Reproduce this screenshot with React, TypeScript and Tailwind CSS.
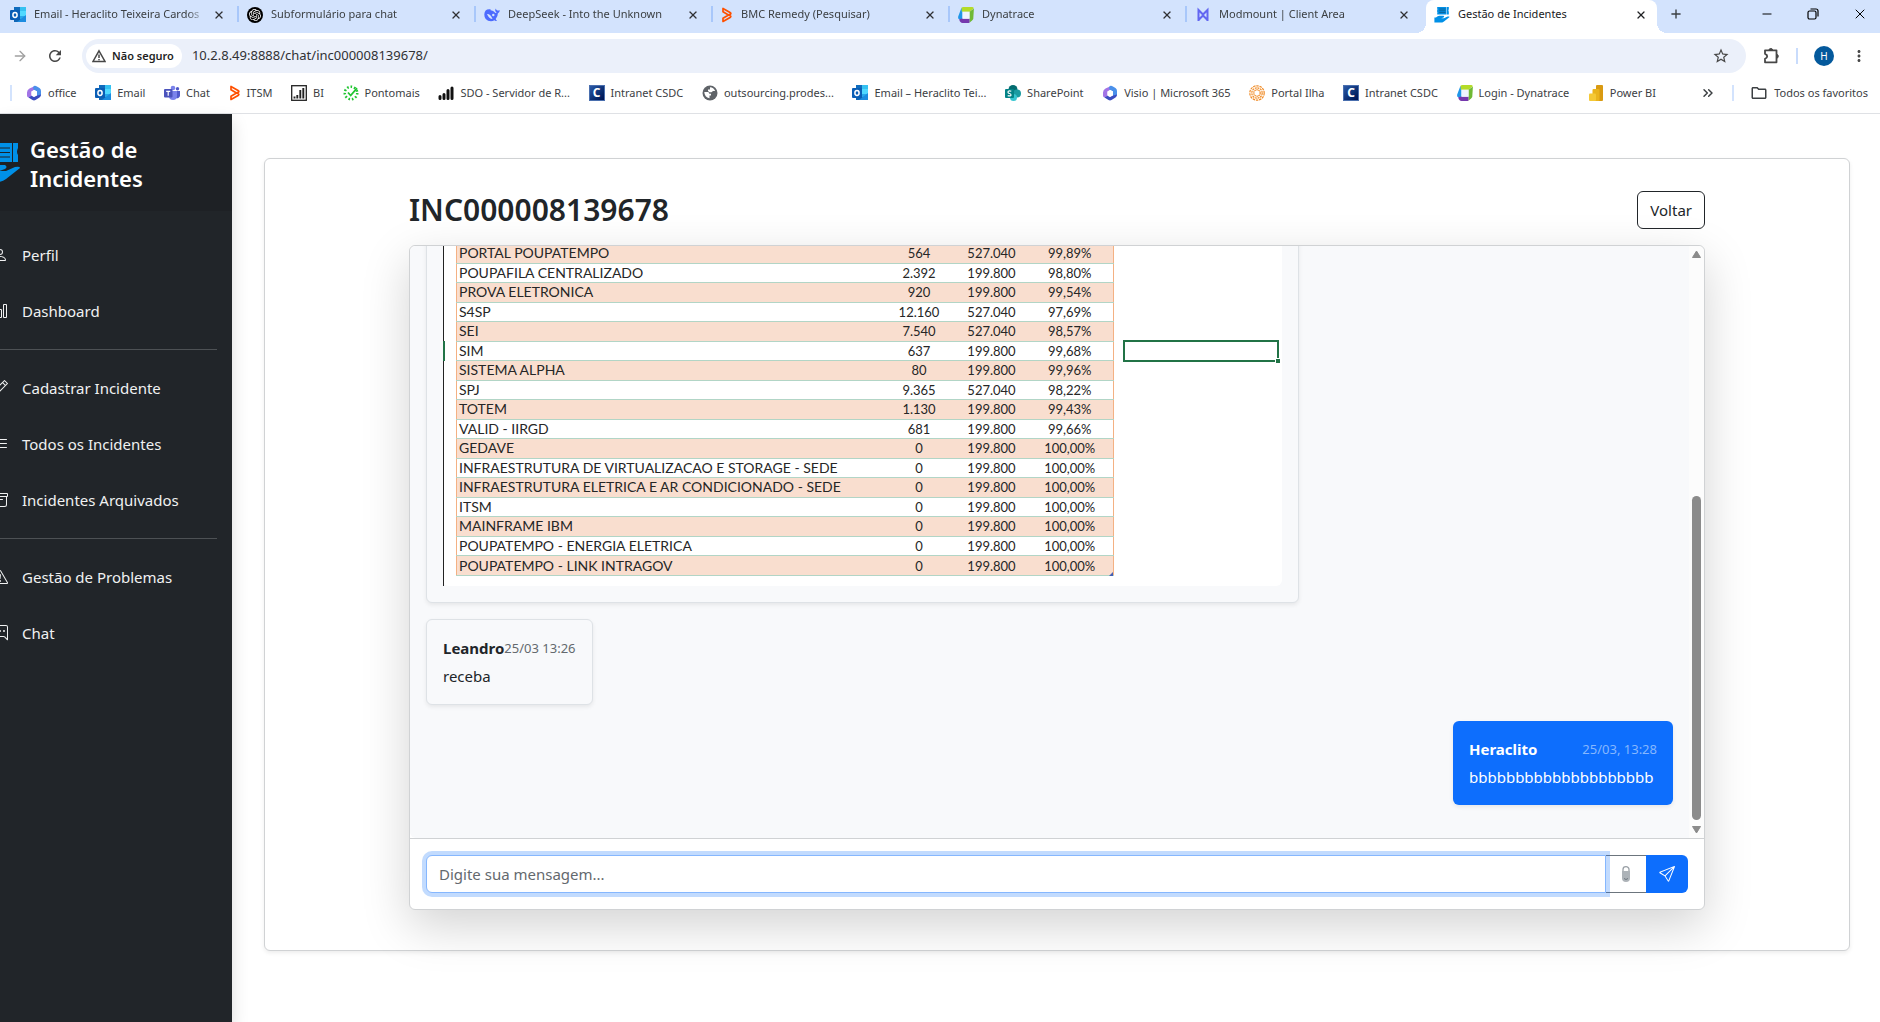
import type { ReactNode } from "react";
import {
  BsArchive,
  BsBarChart,
  BsChatRightDots,
  BsExclamationTriangle,
  BsListUl,
  BsPencil,
  BsPerson,
  BsSend,
} from "react-icons/bs";
import { MdMoreVert, MdOutlineFolder, MdRefresh, MdStarBorder } from "react-icons/md";
import { SiOpenai } from "react-icons/si";
import { ArrowRight, ChevronsRight, Minus, Plus, X } from "lucide-react";

/* ---------- favicons ---------- */

const OutlookIcon = () => (
  <svg viewBox="0 0 16 16" className="size-4 shrink-0" aria-hidden="true">
    <rect x="4" y="0" width="12" height="15" rx="1" fill="#28a8ea" />
    <rect x="4" y="0" width="6" height="4" fill="#0f6cbd" />
    <rect x="10" y="0" width="6" height="4" fill="#35c1f1" />
    <rect x="10" y="4" width="6" height="5" fill="#50d9ff" />
    <path d="M4 9l12 6H4z" fill="#1066b5" />
    <path d="M16 8v7H7z" fill="#1b8ce0" />
    <rect x="0" y="3" width="10" height="10" rx="1" fill="#0a5eb5" />
    <ellipse cx="5" cy="8" rx="2.1" ry="2.4" fill="none" stroke="#fff" strokeWidth="1.5" />
  </svg>
);

const CopilotIcon = () => (
  <svg viewBox="0 0 16 16" className="size-4 shrink-0" aria-hidden="true">
    <path d="M9 1L3.500 3.500Q1 5 1 7.500v3Q1 13 3.500 12.500L5.500 11V6.500L10 4z" fill="#a274e6" />
    <path d="M8.500.800q1-.300 2 .400L13.500 3Q15 4 15 6v4.500L11 11V6.500L7.500 4.500 7 2z" fill="#4a90ea" />
    <path d="M2.500 12.500l3-1.800L8 12l3-1.500 4-1q0 2-1.500 3L9.500 15q-1.500.800-3 0z" fill="#3b4cc0" />
    <path d="M5.500 6.500L8 5l3 1.500V10l-3 1.700L5.500 10z" fill="#fff" />
  </svg>
);

const TeamsIcon = () => (
  <svg viewBox="0 0 16 16" className="size-4 shrink-0" aria-hidden="true">
    <circle cx="9" cy="3" r="2.300" fill="#7b83eb" />
    <circle cx="13.500" cy="3.800" r="1.700" fill="#5059c9" />
    <path d="M11 6h5v5a3 3 0 01-4 2z" fill="#5059c9" />
    <path d="M5 6h8v5a4 4 0 01-8 0z" fill="#7b83eb" />
    <rect x="0" y="4" width="8.500" height="8.500" rx="1" fill="#4b53bc" />
    <path d="M2.200 6.300h4M4.200 6.300v4.500" stroke="#fff" strokeWidth="1.200" />
  </svg>
);

const BmcIcon = () => (
  <svg viewBox="0 0 12 16" className="h-4 w-3 shrink-0" aria-hidden="true">
    <path
      d="M2 1.500v3.200L7.500 8 2 11.300v3.200l7.500-4.300q.700-.700 0-1.400L7.500 8l2-.900q.700-.600 0-1.300z"
      fill="none"
      stroke="#fe5000"
      strokeWidth="1.700"
      strokeLinejoin="round"
    />
  </svg>
);

const BarsBoxIcon = () => (
  <svg viewBox="0 0 16 16" className="size-4 shrink-0" aria-hidden="true">
    <rect x=".7" y=".7" width="14.600" height="14.600" fill="#fff" stroke="#222" strokeWidth="1.300" />
    <path d="M3.500 13.500v-2M6.300 13.500V10M9.300 13.500V5M12.300 13.500V3" stroke="#222" strokeWidth="1.900" />
  </svg>
);

const CheckBurstIcon = () => (
  <svg viewBox="0 0 16 16" className="size-4 shrink-0" aria-hidden="true">
    <circle cx="8" cy="8" r="6.200" fill="none" stroke="#21c531" strokeWidth="2.600" strokeDasharray="1.600 1.900" />
    <circle cx="8" cy="8" r="4.700" fill="#fff" />
    <path d="M5 7.500l2.700 3L14 3.200" fill="none" stroke="#21c531" strokeWidth="1.800" />
  </svg>
);

const SignalBarsIcon = () => (
  <svg viewBox="0 0 16 16" className="size-4 shrink-0" aria-hidden="true">
    <path d="M2 13.500v-2M6 13.500V9.500M10 13.500v-8M14 13.500V3" stroke="#111" strokeWidth="3" strokeLinecap="round" />
  </svg>
);

const LetterCIcon = () => (
  <span className="flex size-4 shrink-0 items-center justify-center border border-[#4a6fae] bg-linear-to-br from-[#2b5aa8] to-[#00104f] text-[12px] leading-none font-bold text-white">
    C
  </span>
);

const GlobeIcon = () => (
  <svg viewBox="0 0 16 16" className="size-4 shrink-0" aria-hidden="true">
    <circle cx="8" cy="8" r="7.500" fill="#5f6368" />
    <path
      d="M2.300 7h3.500q1.500.300 1.500 1.700H9v1.800H7.500v2.800Q2.500 12.500 2.300 7zM8 2.300q3.700.200 5.200 3.700H11L9.500 7.300H7.500L6 6V4.500h2z"
      fill="#fff"
    />
  </svg>
);

const SharePointIcon = () => (
  <svg viewBox="0 0 16 16" className="size-4 shrink-0" aria-hidden="true">
    <circle cx="8" cy="4.500" r="4.500" fill="#036c70" />
    <circle cx="12" cy="8.500" r="4" fill="#1a9ba1" />
    <circle cx="8.500" cy="12.500" r="3.500" fill="#37c6d0" />
    <rect x="0" y="4" width="9" height="9" rx="1" fill="#038387" />
    <path d="M6.300 6.300Q3 5.200 3 7.200q0 1 1.500 1.300T6 10q0 1.500-3.300.600" fill="none" stroke="#fff" strokeWidth="1.200" />
  </svg>
);

const SwirlIcon = () => (
  <svg viewBox="0 0 16 16" className="size-4 shrink-0" fill="none" stroke="#f08a24" aria-hidden="true">
    <circle cx="8" cy="8" r="7.200" strokeWidth="1.200" strokeDasharray="2.500 .800" />
    <circle cx="8" cy="8" r="5.200" strokeWidth="1.200" strokeDasharray="2 .700" />
    <circle cx="8" cy="8" r="3.200" strokeWidth="1.200" strokeDasharray="1.500 .500" />
  </svg>
);

const DynatraceIcon = () => (
  <svg viewBox="0 0 16 16" className="size-4 shrink-0" aria-hidden="true">
    <path d="M3.500.800Q4 0 5.500 0H14q1.500 0 1.800 1.200L11.500 4.800H3z" fill="#b4dc28" />
    <path d="M15.900 1.500L15.300 11.500q-.200 1-1 1.800L11.500 15.800V4.800z" fill="#6fb935" />
    <path d="M3.500.800L.200 9.500Q-.200 12 1.200 12.200H4.500V4.800H3.800z" fill="#1e96e8" />
    <path d="M1.200 12.200L4.500 11.500h7v4q-.500.500-2 .500H4.500Q2 16 1.200 12.200z" fill="#7538ad" />
    <path d="M4.500 4.800h7v7h-7z" fill="#eef4ff" />
  </svg>
);

const PowerBiIcon = () => (
  <svg viewBox="0 0 16 16" className="size-4 shrink-0" aria-hidden="true">
    <rect x="8" y="0" width="7" height="16" rx="1" fill="#d99a12" />
    <rect x="4.500" y="4" width="7" height="12" rx="1" fill="#eab41d" />
    <rect x="1" y="8.500" width="7" height="7.500" rx="1" fill="#f5c936" />
  </svg>
);

const WhaleIcon = () => (
  <svg viewBox="0 0 16 16" className="size-4 shrink-0" aria-hidden="true">
    <path
      d="M15.800 3q-1.300.900-2.500.400Q12 2.500 11.500 1.500q-1 2 1 4-.300.500-1 .500Q9 3 6.500 3.200q.300-.700 0-1Q.500 1.500.300 7.500.200 14 7 14.200q2 0 3.300-.900 1.200.900 2.700.400-.900-.600-1.300-1.600Q14 9.500 13.800 6.500 15.800 5.500 15.800 3z"
      fill="#4d6bfe"
    />
    <path d="M3 7q3.500-.300 5.500 5Q5 12 3 7z" fill="#d3e3fd" />
    <circle cx="9.300" cy="8" r="1.200" fill="#d3e3fd" />
  </svg>
);

const ModmountIcon = () => (
  <svg viewBox="0 0 16 16" className="size-4 shrink-0" aria-hidden="true">
    <path d="M3.500 14V3L8 7.500 12.500 3v11M3.500 13L8 8.500l4.500 4.500" fill="none" stroke="#6366f1" strokeWidth="2" />
  </svg>
);

const TicketHandIcon = ({ className }: { className: string }) => (
  <svg viewBox="0 0 38 40" className={className} aria-hidden="true">
    <path d="M7 0h23v19H7v-3q1-2 0-4-1-2 0-4 1-2 0-4z" fill="#0090e7" />
    <path d="M31 0h5v5q-2 4 0 7v7h-5z" fill="#0090e7" />
    <path d="M12 5h16M12 9.500h16M12 14h16" stroke="#1e2125" strokeWidth="1" />
    <path d="M0 26h4q5-5 10-4h9q3 2 0 4l-6 2 7 0 9-4q5-1 5 1L24 36q-4 3-9 3H0z" fill="#0090e7" />
  </svg>
);

/* ---------- data ---------- */

const tabs: { label: string; icon: ReactNode }[] = [
  { label: "Email - Heraclito Teixeira Cardos", icon: <OutlookIcon /> },
  {
    label: "Subformulário para chat",
    icon: (
      <span className="flex size-4 shrink-0 items-center justify-center rounded-full bg-black">
        <SiOpenai className="size-3 text-white" />
      </span>
    ),
  },
  { label: "DeepSeek - Into the Unknown", icon: <WhaleIcon /> },
  { label: "BMC Remedy (Pesquisar)", icon: <BmcIcon /> },
  { label: "Dynatrace", icon: <DynatraceIcon /> },
  { label: "Modmount | Client Area", icon: <ModmountIcon /> },
];

const bookmarks: { label: string; icon: ReactNode }[] = [
  { label: "office", icon: <CopilotIcon /> },
  { label: "Email", icon: <OutlookIcon /> },
  { label: "Chat", icon: <TeamsIcon /> },
  { label: "ITSM", icon: <BmcIcon /> },
  { label: "BI", icon: <BarsBoxIcon /> },
  { label: "Pontomais", icon: <CheckBurstIcon /> },
  { label: "SDO - Servidor de R...", icon: <SignalBarsIcon /> },
  { label: "Intranet CSDC", icon: <LetterCIcon /> },
  { label: "outsourcing.prodes...", icon: <GlobeIcon /> },
  { label: "Email – Heraclito Tei...", icon: <OutlookIcon /> },
  { label: "SharePoint", icon: <SharePointIcon /> },
  { label: "Visio | Microsoft 365", icon: <CopilotIcon /> },
  { label: "Portal Ilha", icon: <SwirlIcon /> },
  { label: "Intranet CSDC", icon: <LetterCIcon /> },
  { label: "Login - Dynatrace", icon: <DynatraceIcon /> },
  { label: "Power BI", icon: <PowerBiIcon /> },
];

const menuGroups = [
  [
    { label: "Perfil", Icon: BsPerson },
    { label: "Dashboard", Icon: BsBarChart },
  ],
  [
    { label: "Cadastrar Incidente", Icon: BsPencil },
    { label: "Todos os Incidentes", Icon: BsListUl },
    { label: "Incidentes Arquivados", Icon: BsArchive },
  ],
  [
    { label: "Gestão de Problemas", Icon: BsExclamationTriangle },
    { label: "Chat", Icon: BsChatRightDots },
  ],
];

const rows = [
  ["PORTAL POUPATEMPO", "564", "527.040", "99,89%"],
  ["POUPAFILA CENTRALIZADO", "2.392", "199.800", "98,80%"],
  ["PROVA ELETRONICA", "920", "199.800", "99,54%"],
  ["S4SP", "12.160", "527.040", "97,69%"],
  ["SEI", "7.540", "527.040", "98,57%"],
  ["SIM", "637", "199.800", "99,68%"],
  ["SISTEMA ALPHA", "80", "199.800", "99,96%"],
  ["SPJ", "9.365", "527.040", "98,22%"],
  ["TOTEM", "1.130", "199.800", "99,43%"],
  ["VALID - IIRGD", "681", "199.800", "99,66%"],
  ["GEDAVE", "0", "199.800", "100,00%"],
  ["INFRAESTRUTURA DE VIRTUALIZACAO E STORAGE - SEDE", "0", "199.800", "100,00%"],
  ["INFRAESTRUTURA ELETRICA E AR CONDICIONADO - SEDE", "0", "199.800", "100,00%"],
  ["ITSM", "0", "199.800", "100,00%"],
  ["MAINFRAME IBM", "0", "199.800", "100,00%"],
  ["POUPATEMPO - ENERGIA ELETRICA", "0", "199.800", "100,00%"],
  ["POUPATEMPO - LINK INTRAGOV", "0", "199.800", "100,00%"],
];

/* ---------- browser chrome ---------- */

function TabStrip() {
  return (
    <div className="flex h-[33px] items-stretch bg-[#d3e3fd] text-[11px] text-[#3c4043]">
      <div className="mr-1 flex min-w-0">
        {tabs.map((tab) => (
          <div key={tab.label} className="relative flex w-[237px] shrink items-center gap-2 pr-3 pb-1 pl-2.5">
            {tab.icon}
            <button className="min-w-0 flex-1 overflow-hidden mask-r-from-90% text-left whitespace-nowrap">
              {tab.label}
            </button>
            <button aria-label={`Fechar ${tab.label}`}>
              <X className="size-3 text-[#303134]" strokeWidth={2.6} />
            </button>
            {tab.label !== "Modmount | Client Area" && (
              <span className="absolute top-1.5 -right-0.5 h-4 w-0.5 bg-[#a8c7fa]" />
            )}
          </div>
        ))}
      </div>
      <div className="relative flex w-[231px] items-center gap-2 rounded-t-lg bg-white pr-2.5 pb-1 pl-2 text-[#202124]">
        <span className="absolute bottom-0 -left-2.5 size-2.5 bg-[radial-gradient(circle_at_0_0,#d3e3fd_10px,#ffffff_10px)]" />
        <span className="absolute -right-2.5 bottom-0 size-2.5 bg-[radial-gradient(circle_at_100%_0,#d3e3fd_10px,#ffffff_10px)]" />
        <TicketHandIcon className="size-4 shrink-0" />
        <button className="min-w-0 flex-1 truncate text-left">Gestão de Incidentes</button>
        <button aria-label="Fechar Gestão de Incidentes">
          <X className="size-3" strokeWidth={2.6} />
        </button>
      </div>
      <button aria-label="Nova guia" className="ml-2 flex items-center px-1 pb-1.5">
        <Plus className="size-3.5" strokeWidth={2.4} />
      </button>
      <div className="ml-auto flex items-center gap-8 pr-3 pb-1.5 text-black">
        <button aria-label="Minimizar">
          <Minus className="size-3.5" strokeWidth={1.7} />
        </button>
        <button aria-label="Restaurar">
          <svg viewBox="0 0 14 14" className="size-3.5" fill="none" stroke="currentColor" strokeWidth="1.200">
            <rect x="2" y="4" width="8" height="8" rx="1.500" />
            <path d="M4.500 2h5.500a2 2 0 012 2v5.500" />
          </svg>
        </button>
        <button aria-label="Fechar janela">
          <X className="size-4" strokeWidth={1.5} />
        </button>
      </div>
    </div>
  );
}

function AddressBar() {
  return (
    <div className="flex h-[46px] items-center bg-white py-1.5 text-[#474747]">
      <button aria-label="Avançar" className="ml-3">
        <ArrowRight className="size-4 text-[#a0a0a0]" strokeWidth={2} />
      </button>
      <button aria-label="Recarregar" className="ml-[18px]">
        <MdRefresh className="size-[18px]" />
      </button>
      <div className="ml-[18px] flex h-[34px] flex-1 items-center rounded-full bg-[#ebf0fa] pl-1">
        <button className="flex h-6 items-center gap-1.5 rounded-full bg-white pr-2 pl-1.5 text-[11px] font-semibold text-[#1f1f1f]">
          <svg viewBox="0 0 14 14" className="size-3.5" fill="none" stroke="#474747" strokeWidth="1.500" aria-hidden="true">
            <path d="M7 1.800L13 12.500H1zM7 5.500v3.500M7 10v1.300" />
          </svg>
          Não seguro
        </button>
        <input
          aria-label="Endereço"
          defaultValue="10.2.8.49:8888/chat/inc000008139678/"
          className="ml-2.5 min-w-0 flex-1 bg-transparent text-[13px] text-[#303134] outline-none"
        />
        <button aria-label="Favoritar" className="mr-4">
          <MdStarBorder className="size-[18px]" />
        </button>
      </div>
      <button aria-label="Extensões" className="ml-4">
        <svg viewBox="0 0 18 18" className="size-[18px]" fill="none" stroke="#474747" strokeWidth="1.800" aria-hidden="true">
          <path d="M3 3.300h11.500V15.300H3v-3.500Q5.200 11 5.200 9.300T3 6.800z" strokeLinejoin="round" />
          <path d="M7 3a1.800 1.500 0 013.600 0zM14.800 7.500a1.500 1.800 0 010 3.600z" fill="#474747" strokeWidth="1" />
        </svg>
      </button>
      <span className="ml-4 h-4 w-0.5 bg-[#c9dcfc]" />
      <button
        aria-label="Perfil do navegador"
        className="ml-4 flex size-5 items-center justify-center rounded-full bg-[#04599c] text-[10px] text-white"
      >
        H
      </button>
      <button aria-label="Mais opções" className="mr-3 ml-4">
        <MdMoreVert className="size-[18px]" />
      </button>
    </div>
  );
}

function BookmarksBar() {
  return (
    <nav
      aria-label="Favoritos"
      className="flex h-[35px] items-center border-b border-[#dfe1e5] bg-white pb-1.5 text-[11px] text-[#3c4043]"
    >
      <span className="ml-2.5 h-4 w-0.5 shrink-0 bg-[#d3e3fd]" />
      <div className="mr-11 ml-3.5 flex min-w-0 flex-1 items-center justify-between">
        {bookmarks.map((b, i) => (
          <a key={i} href="#" className="flex items-center gap-1.5 whitespace-nowrap">
            {b.icon}
            {b.label}
          </a>
        ))}
      </div>
      <button aria-label="Mais favoritos">
        <ChevronsRight className="size-4" strokeWidth={2.2} />
      </button>
      <span className="ml-4 h-4 w-0.5 shrink-0 bg-[#d3e3fd]" />
      <button className="mr-3 ml-4 flex items-center gap-1.5 whitespace-nowrap">
        <MdOutlineFolder className="size-[18px]" />
        Todos os favoritos
      </button>
    </nav>
  );
}

/* ---------- page ---------- */

function Sidebar() {
  return (
    <aside className="w-[232px] shrink-0 overflow-hidden bg-[#212529] text-white shadow-[0_8px_16px_rgba(0,0,0,0.15)]">
      <div className="flex h-[97px] items-start bg-[#1e2125] pt-[21px]">
        <TicketHandIcon className="mt-2 -ml-[18px] h-10 w-[38px] shrink-0" />
        <h1 className="ml-2.5 text-[22px] leading-[29px] font-semibold">
          Gestão de
          <br />
          Incidentes
        </h1>
      </div>
      <nav className="divide-y divide-[#4d5154] pt-4 pr-[15px]">
        {menuGroups.map((group, i) => (
          <ul key={i} className="pb-2.5 not-first:pt-2.5">
            {group.map(({ label, Icon }) => (
              <li key={label}>
                <a href="#" className="flex h-14 items-center text-[15px] text-[#f0f1f1]">
                  <Icon className="-ml-2 size-4 shrink-0" />
                  <span className="ml-3.5">{label}</span>
                </a>
              </li>
            ))}
          </ul>
        ))}
      </nav>
    </aside>
  );
}

function Spreadsheet() {
  return (
    <div className="flex w-[839px] rounded-b-md bg-white pb-2.5">
      <div className="-mb-2.5 flex w-[13px] shrink-0 flex-col">
        <span className="h-[97px] w-px bg-[#222]" />
        <span className="h-5 w-0.5 bg-[#217346]" />
        <span className="w-px flex-1 bg-[#222]" />
      </div>
      <div className="relative w-[657px] shrink-0">
        <table className="h-[332px] w-full table-fixed border-collapse border-x border-[#f4b183] font-[Lato,sans-serif] text-[13px] leading-[18px] text-[#262626]">
          <colgroup>
            <col className="w-[425px]" />
            <col className="w-[75px]" />
            <col className="w-[70px]" />
            <col className="w-[87px]" />
          </colgroup>
          <tbody>
            {rows.map(([name, down, total, pct]) => (
              <tr key={name} className="border-b border-[#b2d5c6] odd:bg-[#f9decf]">
                <td className="pl-0.5 text-[14px] leading-[18px] whitespace-nowrap">{name}</td>
                <td className="text-center">{down}</td>
                <td className="text-center">{total}</td>
                <td className="text-center">{pct}</td>
              </tr>
            ))}
          </tbody>
        </table>
        <svg viewBox="0 0 4 4" className="absolute right-0 bottom-0 size-1" aria-hidden="true">
          <path d="M4 0v4H0z" fill="#4460b5" />
        </svg>
      </div>
      <div className="relative mt-24 ml-2.5 h-[22px] w-[156px] border-2 border-[#217346]">
        <span className="absolute -right-[3px] -bottom-[3px] size-[5px] border-t border-l border-white bg-[#217346]" />
      </div>
    </div>
  );
}

function Chat() {
  return (
    <section className="rounded-md border border-[#d0d2d4] bg-white shadow-[0_16px_48px_rgba(0,0,0,0.175)]">
      <div className="flex h-[592px]">
        <div className="flex min-w-0 flex-1 flex-col items-start justify-end gap-4 overflow-hidden rounded-tl-md rounded-bl-md bg-[#f8f9fb] px-4 pb-[33px]">
          <article className="shrink-0 rounded-md border border-[#dee2e6] bg-[#f8f9fb] p-4 shadow-[0_2px_4px_rgba(0,0,0,0.075)]">
            <Spreadsheet />
          </article>
          <article className="shrink-0 rounded-md border border-[#dee2e6] bg-[#f8f9fb] p-4 text-[15px] leading-6 text-[#212529] shadow-[0_2px_4px_rgba(0,0,0,0.075)]">
            <header className="mb-1 flex justify-between">
              <strong>Leandro</strong>
              <time className="text-[13px] text-[#64696e]">25/03 13:26</time>
            </header>
            <p>receba</p>
          </article>
          <article className="min-w-[220px] shrink-0 self-end rounded-md bg-[#0d6efd] p-4 text-[15px] leading-6 text-white shadow-[0_2px_4px_rgba(0,0,0,0.075)]">
            <header className="mb-1 flex justify-between">
              <strong>Heraclito</strong>
              <time className="text-[13px] text-[#86b7fe]">25/03, 13:28</time>
            </header>
            <p>bbbbbbbbbbbbbbbbbbbb</p>
          </article>
        </div>
        <div className="flex w-[15px] shrink-0 flex-col items-center rounded-tr-md bg-[#fcfcfc] py-1" aria-hidden="true">
          <svg viewBox="0 0 9 8" className="h-2 w-[9px]">
            <path d="M4.500 1L8.500 7.500H.500z" fill="#8b8b8b" stroke="#8b8b8b" strokeLinejoin="round" />
          </svg>
          <div className="mt-auto h-[324px] w-[9px] rounded-full bg-[#8b8b8b]" />
          <svg viewBox="0 0 9 8" className="mt-1.5 h-2 w-[9px]">
            <path d="M4.500 7L8.500.500H.500z" fill="#8b8b8b" stroke="#8b8b8b" strokeLinejoin="round" />
          </svg>
        </div>
      </div>
      <form className="flex border-t border-[#d0d2d4] p-4" onSubmit={(e) => e.preventDefault()}>
        <input
          aria-label="Mensagem"
          placeholder="Digite sua mensagem..."
          className="relative h-[38px] min-w-0 flex-1 rounded-l-md border border-[#86b7fe] bg-white px-3 text-[15px] text-[#212529] shadow-[0_0_0_4px_rgba(13,110,253,0.25)] outline-none placeholder:text-[#64696e]"
        />
        <button
          type="button"
          aria-label="Anexar arquivo"
          className="flex h-[38px] w-10 items-center justify-center border-y border-[#6c757d] bg-white"
        >
          <svg viewBox="0 0 8 16" className="h-4 w-2" aria-hidden="true">
            <path d="M1 6V3.500a3 2.800 0 016 0V6" fill="none" stroke="#9aa0a6" strokeWidth="1.300" />
            <path d="M0 5h8v7a4 4 0 01-8 0z" fill="#adb3b8" />
            <path d="M3 2.500h2V5H3z" fill="#fff" />
            <path d="M2 12.500q2 2 4 0" fill="none" stroke="#6c757d" />
          </svg>
        </button>
        <button
          type="submit"
          aria-label="Enviar"
          className="flex h-[38px] w-[42px] items-center justify-center rounded-r-md bg-[#0d6efd] text-white"
        >
          <BsSend className="size-4" />
        </button>
      </form>
    </section>
  );
}

export default function App() {
  return (
    <div className="flex min-h-screen flex-col overflow-x-hidden bg-white font-['Noto_Sans',sans-serif]">
      <header>
        <TabStrip />
        <AddressBar />
        <BookmarksBar />
      </header>
      <div className="flex flex-1">
        <Sidebar />
        <main className="min-w-0 flex-1 pt-11 pr-[30px] pl-8">
          <div className="rounded-md border border-[#d0d2d4] bg-white px-8 pt-8 pb-10 shadow-[0_2px_4px_rgba(0,0,0,0.075)]">
            <div className="mx-auto max-w-[1296px]">
              <div className="mb-4 flex items-center justify-between">
                <h2 className="text-[30px] leading-[38px] font-semibold text-[#212529]">INC000008139678</h2>
                <button className="h-[38px] rounded-md border border-[#212529] px-3 text-[15px] text-[#212529]">
                  Voltar
                </button>
              </div>
              <Chat />
            </div>
          </div>
        </main>
      </div>
    </div>
  );
}
